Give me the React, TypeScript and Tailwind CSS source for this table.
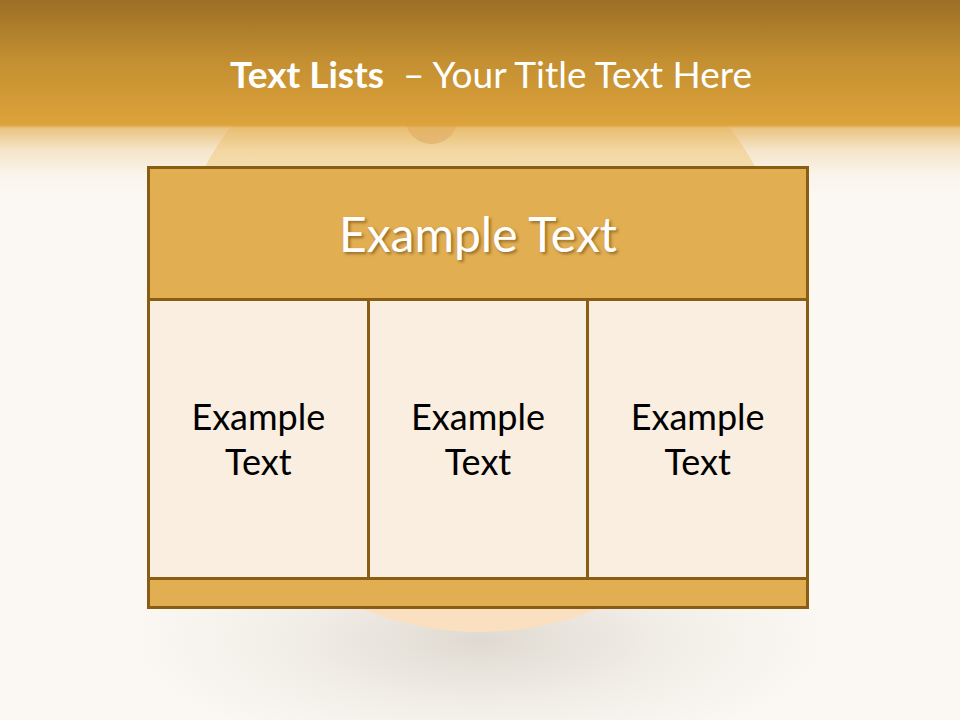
import React from "react";

export default function App() {
  const cells = ["Example", "Example", "Example"];
  return (
    <div
      className="relative w-[960px] h-[720px] overflow-hidden bg-[#fbf8f3]"
      style={{ fontFamily: "Lato, 'Open Sans', sans-serif" }}
    >
      {/* soft shadow under the sphere */}
      <div className="absolute left-[130px] top-[520px] w-[700px] h-[240px] rounded-full bg-[radial-gradient(ellipse_at_center,rgba(200,192,180,0.55)_0%,rgba(220,214,205,0.35)_35%,rgba(251,248,243,0)_70%)]" />
      {/* big sphere behind the table */}
      <div className="absolute left-[166px] top-[4px] w-[628px] h-[628px] rounded-full bg-[linear-gradient(180deg,#f2d897_0%,#f5dfab_25%,#f9e6c8_80%,#fadfc0_100%)]" />
      {/* small sphere */}
      <div className="absolute left-[405px] top-[91px] w-[53px] h-[53px] rounded-full bg-[#ddac6a]" />
      {/* header band */}
      <div className="absolute left-0 top-0 w-full h-[200px] bg-[linear-gradient(180deg,#9b6f26_0px,#c38f31_60px,#dba13a_120px,#dca23b_125px,rgba(230,182,100,0.8)_128px,rgba(238,205,150,0.45)_150px,rgba(245,230,205,0.2)_175px,rgba(251,248,243,0)_200px)]" />

      <div className="relative flex flex-col">
        <div className="h-[166px] flex justify-center pt-[52px] pl-[22px]">
          <div className="text-white text-[37px] leading-[44px] whitespace-pre">
            <span className="font-bold">Text Lists</span>
            <span>{"  \u2013 Your Title Text Here"}</span>
          </div>
        </div>

        <div className="ml-[147px] w-[662px] h-[443px] border-[3px] border-[#8a5d15] flex flex-col">
          <div className="h-[132px] bg-[#e2ae52] flex items-center justify-center border-b-[3px] border-[#8a5d15]">
            <span className="text-white text-[48px] leading-[56px] [text-shadow:2px_2px_3px_rgba(90,60,10,0.55)]">
              Example Text
            </span>
          </div>
          <div className="h-[279px] flex bg-[#f9eedf] border-b-[3px] border-[#8a5d15]">
            {cells.map((c, i) => (
              <div
                key={i}
                className={
                  "flex-1 flex items-center justify-center text-center text-black text-[36px] leading-[45px] " +
                  (i < 2 ? "border-r-[3px] border-[#8a5d15]" : "")
                }
              >
                <div>
                  {c}
                  <br />
                  Text
                </div>
              </div>
            ))}
          </div>
          <div className="flex-1 bg-[#e2ae52]" />
        </div>
      </div>
    </div>
  );
}
